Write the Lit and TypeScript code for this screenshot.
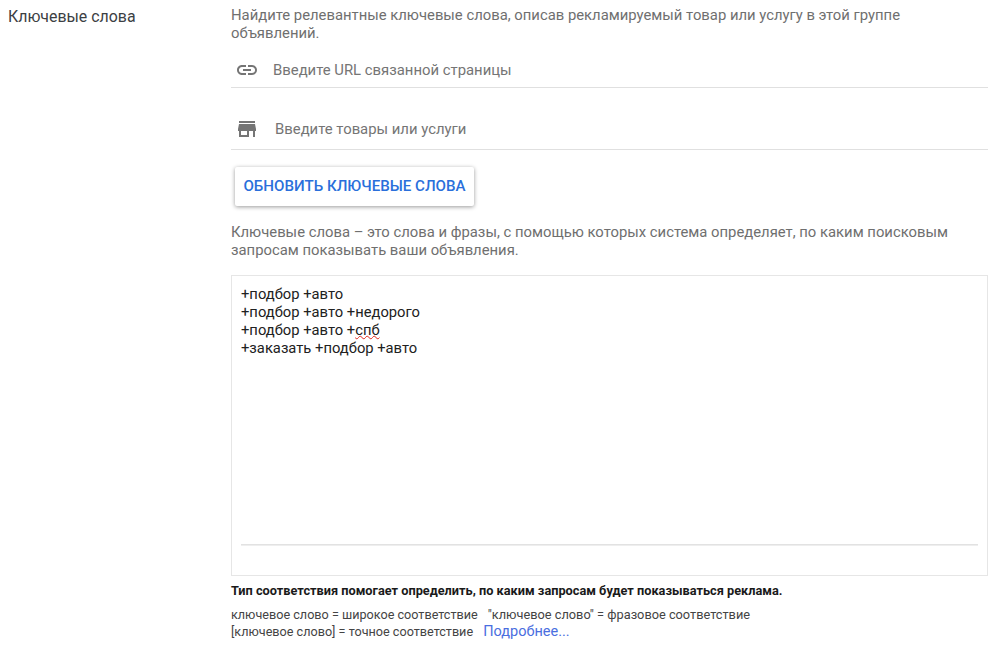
import { LitElement, html, css } from "lit";
import { customElement } from "lit/decorators.js";

@customElement("app-root")
export class AppRoot extends LitElement {
  static styles = css`
    :host {
      display: block;
      width: 1000px;
      height: 657px;
      overflow: hidden;
      background: #fff;
      font-family: Roboto, "Liberation Sans", sans-serif;
      color: #212121;
    }
    .page { display: flex; padding-top: 6px; }
    .label { width: 231px; flex: none; padding-left: 8px; box-sizing: border-box; font-size: 15.9px; line-height: 21px; color: #3c4043; }
    .main { width: 757px; flex: none; }
    .desc { font-size: 14.83px; line-height: 18px; color: #6f6f6f; margin: 0; }
    .field { display: flex; align-items: center; border-bottom: 1px solid #e0e0e0; font-size: 14.87px; color: #757575; box-sizing: border-box; padding-left: 4px; }
    .f1 { height: 46px; padding-top: 11px; gap: 14px; }
    .f2 { height: 40px; padding-bottom: 2px; gap: 16px; margin-top: 22px; }
    svg { display: block; fill: #757575; flex: none; }
    .btn {
      display: flex; align-items: center; justify-content: center;
      box-sizing: border-box; padding-bottom: 1px;
      width: 239px; height: 39px; margin: 17px 0 0 4px;
      font-size: 15.1px; font-weight: 500; color: #2a6fdb;
      background: #fff; border-radius: 2px;
      box-shadow: 0 1px 4px rgba(0,0,0,.4);
    }
    .desc2 { font-size: 14.83px; line-height: 18px; color: #6f6f6f; margin: 17px 0 0; width: 740px; }
    .box {
      box-sizing: border-box; height: 301px; margin-top: 16px; width: 757px;
      border: 1px solid #e6e6e6; padding: 9px 9px 0 9px;
      display: flex; flex-direction: column;
      font-size: 14.75px; line-height: 18px; color: #212121;
    }
    .kw { flex: 1; }
    .sp { text-decoration: underline wavy #e0281c 1px; text-underline-offset: 0; }
    .rule { height: 1px; background: #e2e2e2; margin-bottom: 29px; border-bottom: 1px solid #eeeeee; }
    .hint { font-size: 12.75px; font-weight: 700; line-height: 16px; color: #1a1a1a; margin: 7px 0 0; }
    .legend { font-size: 12.64px; line-height: 15px; color: #444; margin-top: 8px; }
    .row1 { margin-bottom: 2px; }
    .legend .a { margin-left: 7px; font-size: 12.78px; }
    .more { font-size: 14.5px; color: #4a6ee0; margin-left: 7px; }
  `;

  render() {
    return html`<div class="page">
      <div class="label">Ключевые слова</div>
      <div class="main">
        <p class="desc">Найдите релевантные ключевые слова, описав рекламируемый товар или услугу в этой группе<br />объявлений.</p>
        <div class="field f1">
          <svg width="24" height="24" viewBox="0 0 24 24"><path d="M3.9 12c0-1.71 1.39-3.1 3.1-3.1h4V7H7c-2.76 0-5 2.24-5 5s2.24 5 5 5h4v-1.9H7c-1.71 0-3.1-1.39-3.1-3.1zM8 13h8v-2H8v2zm9-6h-4v1.9h4c1.71 0 3.1 1.39 3.1 3.1s-1.39 3.1-3.1 3.1h-4V17h4c2.76 0 5-2.24 5-5s-2.24-5-5-5z"/></svg>
          <span>Введите URL связанной страницы</span>
        </div>
        <div class="field f2">
          <svg width="24" height="24" viewBox="0 0 24 24"><path d="M20 4H4v2h16V4zm1 10v-2l-1-5H4l-1 5v2h1v6h10v-6h4v6h2v-6h1zm-9 4H6v-4h6v4z"/></svg>
          <span>Введите товары или услуги</span>
        </div>
        <div class="btn">ОБНОВИТЬ КЛЮЧЕВЫЕ СЛОВА</div>
        <p class="desc2">Ключевые слова – это слова и фразы, с помощью которых система определяет, по каким поисковым запросам показывать ваши объявления.</p>
        <div class="box">
          <div class="kw">+подбор +авто<br />+подбор +авто +недорого<br />+подбор +авто +<span class="sp">спб</span><br />+заказать +подбор +авто</div>
          <div class="rule"></div>
        </div>
        <p class="hint">Тип соответствия помогает определить, по каким запросам будет показываться реклама.</p>
        <div class="legend">
          <div class="row1">ключевое слово = широкое соответствие <span class="a">"ключевое слово" = фразовое соответствие</span></div>
          <div>[ключевое слово] = точное соответствие <span class="more">Подробнее...</span></div>
        </div>
      </div>
    </div>`;
  }
}
